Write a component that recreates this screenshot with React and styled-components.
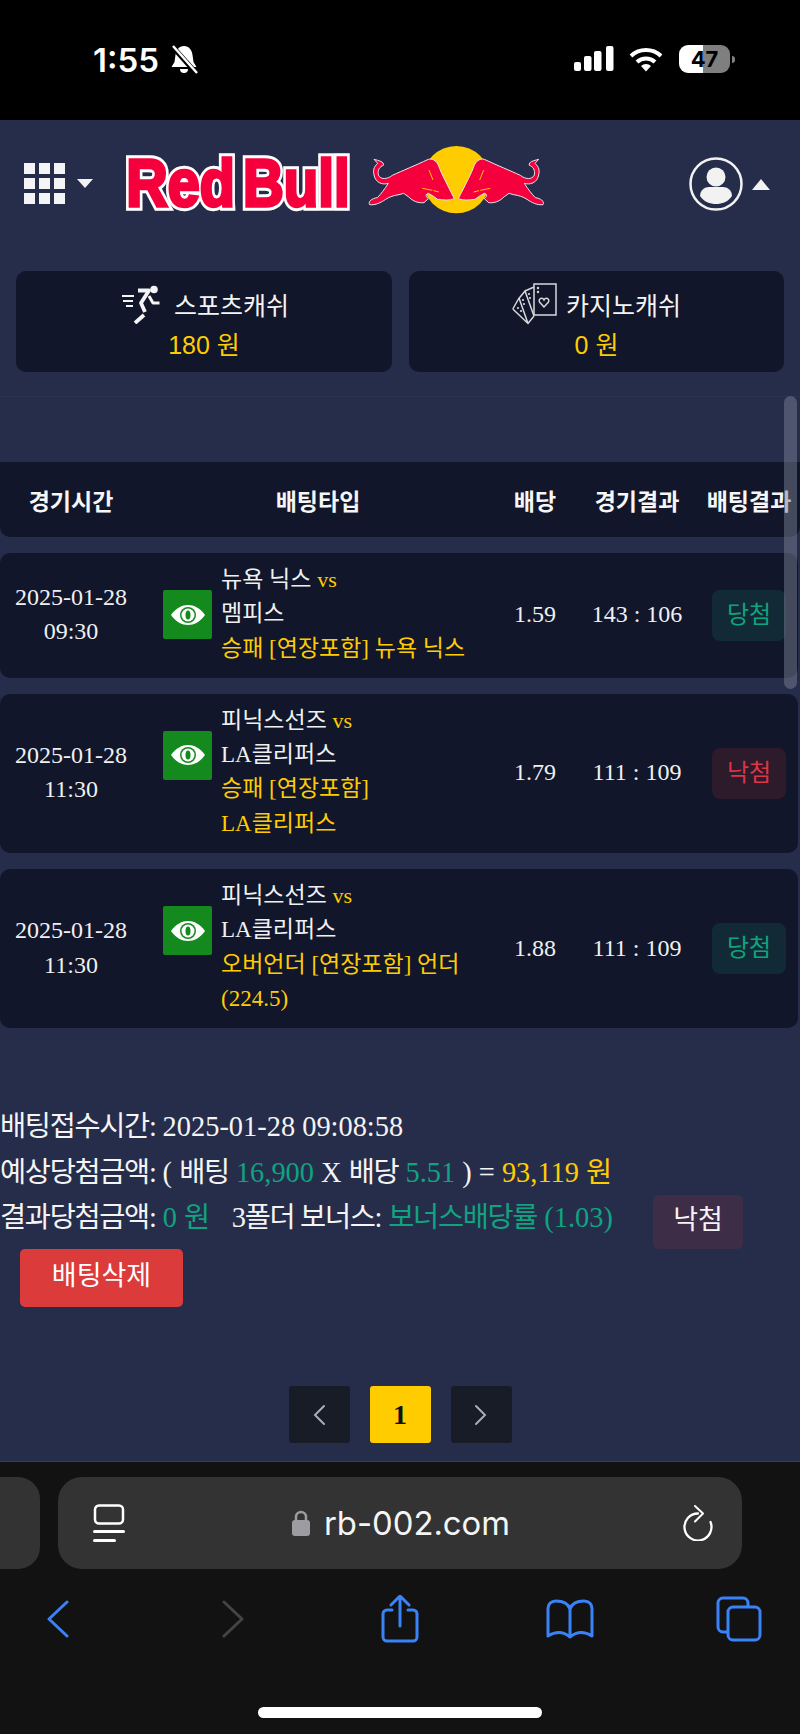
import React from 'react';
import styled, { createGlobalStyle } from 'styled-components';

const GOLD = '#ffcc00';
const GREEN = '#10a37f';
const BLUE = '#3a82f7';
const SERIF = '"Liberation Serif", "Noto Sans CJK KR", serif';
const SANS = '"Liberation Sans", "Noto Sans CJK KR", sans-serif';

const GlobalStyle = createGlobalStyle`
  html, body {
    margin: 0;
    padding: 0;
    background: #121212;
  }
  * {
    box-sizing: border-box;
  }
`;

const Page = styled.div`
  position: relative;
  width: 800px;
  height: 1734px;
  overflow: hidden;
  display: flex;
  flex-direction: column;
  font-family: ${SERIF};
`;

/* status bar */
const StatusBar = styled.div`
  height: 120px;
  background: #000;
  display: flex;
  align-items: flex-start;
  padding: 45px 0 0 93px;
  color: #fff;
`;

const Clock = styled.div`
  font-family: Inter, sans-serif;
  font-size: 33px;
  font-weight: 600;
  line-height: 30px;
  width: 77px;
`;

const StatusIcons = styled.div`
  display: flex;
  align-items: flex-start;
  margin-left: 376px;
`;

const Battery = styled.div`
  width: 51px;
  height: 28px;
  margin-left: 16px;
  border-radius: 9px;
  background: linear-gradient(90deg, #fff 0 24px, #7f7f7f 24px);
  color: #000;
  font-family: Inter, sans-serif;
  font-size: 22px;
  font-weight: 700;
  line-height: 28px;
  text-align: center;
`;

const BatteryNub = styled.div`
  width: 3px;
  height: 7px;
  margin: 11px 0 0 2px;
  border-radius: 0 3px 3px 0;
  background: #7f7f7f;
`;

/* site */
const Main = styled.div`
  position: relative;
  height: 1342px;
  background: #262d4b;
  border-bottom: 1px solid #3a3f52;
`;

const Header = styled.div`
  height: 151px;
  display: flex;
  align-items: flex-start;
  padding: 10px 30px 0 24px;
`;

const MenuBtn = styled.div`
  display: flex;
  align-items: center;
  gap: 12px;
  margin-top: 33px;
`;

const MenuGrid = styled.div`
  display: grid;
  grid-template-columns: repeat(3, 11px);
  grid-auto-rows: 11px;
  gap: 4px;
`;

const MenuDot = styled.span`
  background: #f4f4f6;
`;

const Triangle = styled.span`
  width: 0;
  height: 0;
  border-left: ${(p) => p.$w}px solid transparent;
  border-right: ${(p) => p.$w}px solid transparent;
  ${(p) => (p.$up ? 'border-bottom' : 'border-top')}: ${(p) => p.$h}px solid #f2f2f2;
`;

const Logo = styled.svg`
  width: 450px;
  height: 100px;
  margin-left: 16px;
  flex: none;
`;

const UserBtn = styled.div`
  display: flex;
  align-items: center;
  gap: 9px;
  margin-left: auto;
  margin-top: 27px;
`;

const Wallets = styled.div`
  display: grid;
  grid-template-columns: 376px 375px;
  gap: 17px;
  padding: 0 16px;
`;

const Wallet = styled.div`
  height: 101px;
  border-radius: 10px;
  background: #11162b;
  display: flex;
  flex-direction: column;
  align-items: center;
  padding-top: 12px;
  font-family: ${SANS};
`;

const WalletTitle = styled.div`
  display: flex;
  align-items: center;
  gap: ${(p) => p.$gap}px;
  height: 42px;
  margin-left: ${(p) => p.$shift || 0}px;
  color: #f4f4f4;
  font-size: 25px;
`;

const WalletValue = styled.div`
  margin-top: 2px;
  color: ${GOLD};
  font-size: 25px;
  line-height: 36px;
`;

const Divider = styled.div`
  height: 1px;
  margin-top: 24px;
  background: #2c3352;
`;

const Table = styled.div`
  padding-top: 65px;
`;

const HeadRow = styled.div`
  display: grid;
  grid-template-columns: 142px 352px 82px 122px 102px;
  align-items: center;
  height: 75px;
  background: #11162b;
  border-radius: 0 0 10px 10px;
  color: #f6f6f6;
  font-family: ${SANS};
  font-size: 23px;
  font-weight: 700;
  text-align: center;
`;

const BetRow = styled.div`
  display: grid;
  grid-template-columns: 142px 352px 82px 122px 102px;
  align-items: center;
  width: 798px;
  margin-top: 16px;
  padding: 10px 0 12px;
  background: #11162b;
  border-radius: 10px;
  color: #f0f0f0;
  font-size: 24px;
  line-height: 34.3px;
  text-align: center;
`;

const BetCell = styled.div`
  display: flex;
  align-items: flex-start;
  gap: 9px;
  padding: 0 20px 0 21px;
  text-align: left;
  font-size: 23px;
`;

const EyeBox = styled.div`
  flex: none;
  width: 49px;
  height: 49px;
  margin-top: 27px;
  border-radius: 2px;
  background: #148a1e;
  display: flex;
  align-items: center;
  justify-content: center;
`;

const Vs = styled.span`
  color: ${GOLD};
  font-size: 22px;
`;

const Pick = styled.div`
  color: ${GOLD};
  word-break: keep-all;
`;

const Result = styled.div`
  width: 74px;
  height: 51px;
  justify-self: center;
  margin-top: 2px;
  border-radius: 8px;
  background: ${(p) => (p.$won ? '#122a35' : '#2d1a2b')};
  color: ${(p) => (p.$won ? GREEN : '#dc3545')};
  font-family: ${SANS};
  font-size: 24px;
  line-height: 49px;
`;

const Details = styled.div`
  padding-top: 76px;
  color: #f4f4f4;
  font-size: 28.4px;
`;

const Line = styled.div`
  height: 46px;
  line-height: 46px;
  white-space: pre;
`;

const Ko = styled.span`
  letter-spacing: -1.3px;
`;

const LastLine = styled.div`
  display: flex;
  align-items: flex-start;
  height: 54px;
  margin-top: -1px;
`;

const LastText = styled.div`
  line-height: 46px;
  white-space: pre;
`;

const BonusLabel = styled(Ko)`
  margin-left: 23px;
`;

const Green = styled.span`
  color: ${GREEN};
`;

const Gold = styled.span`
  color: ${GOLD};
`;

const LostBtn = styled.div`
  width: 90px;
  height: 54px;
  margin-left: auto;
  margin-right: 57px;
  border-radius: 6px;
  background: #3d2d47;
  text-align: center;
  line-height: 50px;
  font-size: 27px;
`;

const DeleteBtn = styled.div`
  width: 163px;
  height: 58px;
  margin-left: 20px;
  border-radius: 5px;
  background: #dc3b3b;
  color: #fff;
  text-align: center;
  line-height: 54px;
  font-size: 27px;
`;

const Pager = styled.div`
  display: flex;
  justify-content: center;
  gap: 20px;
  margin-top: 79px;
`;

const PageBtn = styled.div`
  width: 61px;
  height: 57px;
  border-radius: 3px;
  background: ${(p) => (p.$active ? GOLD : '#171c26')};
  color: #111;
  display: flex;
  align-items: center;
  justify-content: center;
  font-size: 28px;
  font-weight: 700;
`;

const ScrollThumb = styled.div`
  position: absolute;
  top: 276px;
  right: 3px;
  width: 13px;
  height: 293px;
  border-radius: 7px;
  background: rgba(120, 125, 145, 0.5);
`;

/* browser chrome */
const Browser = styled.div`
  flex: 1;
  background: #121212;
  padding-top: 15px;
`;

const UrlRow = styled.div`
  display: flex;
  gap: 18px;
  height: 92px;
`;

const PrevTab = styled.div`
  width: 40px;
  border-radius: 0 22px 22px 0;
  background: #333;
`;

const UrlBar = styled.div`
  width: 684px;
  border-radius: 24px;
  background: #333;
  display: flex;
  align-items: center;
  padding: 0 29px 0 35px;
`;

const UrlText = styled.div`
  display: flex;
  align-items: center;
  gap: 14px;
  margin-left: 167px;
  margin-right: auto;
  color: #f5f5f5;
  font-family: Inter, sans-serif;
  font-size: 32.800px;
`;

const NavRow = styled.div`
  display: grid;
  grid-template-columns: 116px 234px 100px 240px 98px;
  align-items: center;
  justify-items: center;
  height: 48px;
  margin-top: 26px;
`;

const HomeBar = styled.div`
  width: 284px;
  height: 11px;
  margin: 64px auto 0;
  border-radius: 6px;
  background: #fff;
`;

/* drawings */
const BULL =
  'M795 88C810 92 826 95 823 106C812 110 805 120 808 135C815 150 835 148 850 136C880 122 920 106 958 88C974 84 986 96 992 116C1002 140 1018 170 1036 206C1022 212 1002 210 986 208L972 198L958 190C950 192 948 198 958 206L945 218C928 220 912 214 898 200L884 190L870 194C856 196 842 200 830 208C815 218 800 226 782 224C776 214 790 205 805 203C815 193 828 176 838 160C822 165 800 160 795 135C790 115 800 106 806 100Z';

const RedBullLogo = () => (
  <Logo viewBox="0 0 1350 300">
    <circle cx="1042" cy="149" r="101" fill="#ffcc00" />
    <path d={BULL} fill="#f5003c" stroke="#e6e6ee" strokeWidth="3" />
    <path d={BULL} fill="#f5003c" stroke="#e6e6ee" strokeWidth="3" transform="translate(2084 0) scale(-1 1)" />
    <path d="M960 120l12 30M940 175l30 6M990 186l-16-4" stroke="#ffcc00" strokeWidth="3" fill="none" />
    <path d="M1124 120l-12 30M1144 175l-30 6M1094 186l16-4" stroke="#ffcc00" strokeWidth="3" fill="none" />
    <g fontFamily="Liberation Sans, sans-serif" fontWeight="700" fontSize="198">
      <g fill="#fff" stroke="#fff" strokeWidth="28">
        <text x="52" y="227" textLength="326" lengthAdjust="spacingAndGlyphs">Red</text>
        <text x="402" y="227" textLength="320" lengthAdjust="spacingAndGlyphs">Bull</text>
      </g>
      <g fill="#f5003c" stroke="#f5003c" strokeWidth="10">
        <text x="52" y="227" textLength="326" lengthAdjust="spacingAndGlyphs">Red</text>
        <text x="402" y="227" textLength="320" lengthAdjust="spacingAndGlyphs">Bull</text>
      </g>
    </g>
  </Logo>
);

const BellOff = () => (
  <svg width="28" height="30" viewBox="0 0 28 30">
    <path d="M14 1c5 0 8 4 8.500 9l1 7 3 5H1.500l3-5 1-7C6 5 9 1 14 1z" fill="#fff" />
    <path d="M10 24h8a4 4 0 0 1-8 0z" fill="#fff" />
    <path d="M2 1l24 27" stroke="#000" strokeWidth="5" />
    <path d="M3 1l24 27" stroke="#fff" strokeWidth="2.500" />
  </svg>
);

const Signal = () => (
  <svg width="40" height="26" viewBox="0 0 40 26" style={{ marginTop: '1px' }}>
    <rect x="0" y="16" width="7" height="9" rx="2" fill="#fff" />
    <rect x="10" y="10" width="7.500" height="15" rx="2" fill="#fff" />
    <rect x="20" y="5" width="7.500" height="20" rx="2" fill="#fff" />
    <rect x="32" y="0" width="7.500" height="25" rx="2" fill="#fff" />
  </svg>
);

const Wifi = () => (
  <svg width="34" height="25" viewBox="0 0 34 25" style={{ marginLeft: '15px', marginTop: '2px' }}>
    <path d="M2 9a22 22 0 0 1 30 0" stroke="#fff" strokeWidth="4" fill="none" />
    <path d="M8 15a13 13 0 0 1 18 0" stroke="#fff" strokeWidth="4" fill="none" />
    <path d="M12 19a7 7 0 0 1 10 0l-5 5.500z" fill="#fff" />
  </svg>
);

const UserIcon = () => (
  <svg width="54" height="54" viewBox="0 0 54 54">
    <circle cx="27" cy="27" r="25.500" fill="none" stroke="#f2f2f2" strokeWidth="2.500" />
    <circle cx="27" cy="20" r="9.500" fill="#f2f2f2" />
    <path d="M11 39c0-6 5-9 9-9h14c4 0 9 3 9 9-4 6-10 8-16 8s-12-2-16-8z" fill="#f2f2f2" />
  </svg>
);

const RunnerIcon = () => (
  <svg width="38" height="39" viewBox="0 0 38 39" fill="none" stroke="#f4f4f4" strokeLinejoin="round">
    <circle cx="32" cy="4.500" r="3.800" fill="#f4f4f4" stroke="none" />
    <path d="M16 5.500h11L19 18l4 9" strokeWidth="3.800" />
    <path d="M22 30l-9 8" strokeWidth="3.800" />
    <path d="M27 11l4 7h6.500" strokeWidth="3" />
    <path d="M0 11h12M1 16h10M4 21h7" strokeWidth="1.800" />
  </svg>
);

const CardsIcon = () => (
  <svg width="45" height="42" viewBox="0 0 45 42" fill="none" stroke="#d8d8dc" strokeWidth="1.500">
    <path d="M22 1h22v31H22z" />
    <path d="M0.800 26L7 15M0.800 26L16 40.500l6-7.500M7 15l9 25.500M6.500 16L13 8l9 25M13 8l9-4" />
    <path d="M32 24l-4.500-5c-1.500-3.500 3-5 4.500-2 1.500-3 6-1.500 4.500 2z" />
    <g fill="#d8d8dc" stroke="none">
      <circle cx="26" cy="5" r="1.200" />
      <circle cx="26" cy="9" r="1.200" />
      <circle cx="17" cy="11" r="1.100" />
      <circle cx="18" cy="15" r="1.100" />
      <circle cx="11" cy="17" r="1.100" />
      <circle cx="12" cy="21" r="1.100" />
      <circle cx="6" cy="25" r="1.100" />
      <circle cx="9" cy="28" r="1.100" />
    </g>
  </svg>
);

const EyeIcon = () => (
  <svg width="36" height="20" viewBox="0 0 36 20">
    <path d="M1 10C6 3 12 0 18 0s12 3 17 10c-5 7-11 10-17 10S6 17 1 10z" fill="#fff" />
    <circle cx="18" cy="10" r="8" fill="#148a1e" />
    <circle cx="18" cy="10" r="6.500" fill="#fff" />
    <ellipse cx="18" cy="10" rx="2.500" ry="4.500" fill="#148a1e" />
  </svg>
);

const PagerArrow = ({ left }) => (
  <svg width="14" height="22" viewBox="0 0 14 22" fill="none" stroke="#a9adb5" strokeWidth="2" strokeLinecap="round">
    <path d={left ? 'M12 2L3 11l9 9' : 'M2 2l9 9-9 9'} />
  </svg>
);

const ReaderIcon = () => (
  <svg width="32" height="38" viewBox="0 0 32 38" fill="none" stroke="#fff" strokeWidth="2.500" strokeLinecap="round">
    <rect x="2" y="1.500" width="28" height="18" rx="4" />
    <path d="M1.500 27.500h29M1.500 36.500h20" strokeWidth="3" />
  </svg>
);

const LockIcon = () => (
  <svg width="18" height="26" viewBox="0 0 18 26" fill="none">
    <path d="M4 11V7a5 5 0 0 1 10 0v4" stroke="#9c9ca1" strokeWidth="2.500" />
    <rect x="0" y="10" width="18" height="16" rx="3" fill="#9c9ca1" />
  </svg>
);

const RefreshIcon = () => (
  <svg width="30" height="36" viewBox="0 0 30 36" fill="none" stroke="#fff" strokeWidth="2.300" strokeLinecap="round" strokeLinejoin="round">
    <path d="M15 8.500A13.500 13.500 0 1 0 27.500 17" />
    <path d="M12 1l8 7.500-8 8" strokeWidth="2" />
  </svg>
);

const BackIcon = ({ color }) => (
  <svg width="22" height="38" viewBox="0 0 22 38" fill="none" stroke={color} strokeWidth="3" strokeLinecap="round" strokeLinejoin="round">
    <path d="M20 2L2 19l18 17" />
  </svg>
);

const ForwardIcon = ({ color }) => (
  <svg width="22" height="38" viewBox="0 0 22 38" fill="none" stroke={color} strokeWidth="3" strokeLinecap="round" strokeLinejoin="round">
    <path d="M2 2l18 17L2 36" />
  </svg>
);

const ShareIcon = () => (
  <svg width="38" height="48" viewBox="0 0 38 48" fill="none" stroke={BLUE} strokeWidth="3" strokeLinecap="round" strokeLinejoin="round">
    <path d="M11 15H6a4 4 0 0 0-4 4v23a4 4 0 0 0 4 4h26a4 4 0 0 0 4-4V19a4 4 0 0 0-4-4h-5" />
    <path d="M19 31V2M10 10l9-9 9 9" />
  </svg>
);

const BookIcon = () => (
  <svg width="48" height="40" viewBox="0 0 48 40" fill="none" stroke={BLUE} strokeWidth="3" strokeLinecap="round" strokeLinejoin="round">
    <path d="M24 38V10C22 4 16 2 10 2 5 2 2 5 2 10v27c8-5 16-4 22 1 6-5 14-6 22-1V10c0-5-3-8-8-8-6 0-12 2-14 8" />
  </svg>
);

const TabsIcon = () => (
  <svg width="46" height="46" viewBox="0 0 46 46" fill="none" stroke={BLUE} strokeWidth="3" strokeLinejoin="round">
    <path d="M11 36H7a5 5 0 0 1-5-5V7a5 5 0 0 1 5-5h20a5 5 0 0 1 5 5v4" />
    <rect x="12" y="11" width="32" height="33" rx="5" />
  </svg>
);

const bets = [
  { date: '2025-01-28', time: '09:30', home: '뉴욕 닉스', away: '멤피스', pick: '승패 [연장포함] 뉴욕 닉스', odds: '1.59', score: '143 : 106', won: true },
  { date: '2025-01-28', time: '11:30', home: '피닉스선즈', away: 'LA클리퍼스', pick: '승패 [연장포함] LA클리퍼스', odds: '1.79', score: '111 : 109', won: false },
  { date: '2025-01-28', time: '11:30', home: '피닉스선즈', away: 'LA클리퍼스', pick: '오버언더 [연장포함] 언더 (224.5)', odds: '1.88', score: '111 : 109', won: true },
];

export default function App() {
  return (
    <Page>
      <GlobalStyle />
      <StatusBar>
        <Clock>1:55</Clock>
        <BellOff />
        <StatusIcons>
          <Signal />
          <Wifi />
          <Battery>47</Battery>
          <BatteryNub />
        </StatusIcons>
      </StatusBar>

      <Main>
        <Header>
          <MenuBtn>
            <MenuGrid>
              {Array.from({ length: 9 }).map((_, i) => (
                <MenuDot key={i} />
              ))}
            </MenuGrid>
            <Triangle $w={8} $h={9} />
          </MenuBtn>
          <RedBullLogo />
          <UserBtn>
            <UserIcon />
            <Triangle $up $w={9} $h={11} />
          </UserBtn>
        </Header>

        <Wallets>
          <Wallet>
            <WalletTitle $gap={14} $shift={3}>
              <RunnerIcon />
              스포츠캐쉬
            </WalletTitle>
            <WalletValue>180 원</WalletValue>
          </Wallet>
          <Wallet>
            <WalletTitle $gap={9}>
              <CardsIcon />
              카지노캐쉬
            </WalletTitle>
            <WalletValue>0 원</WalletValue>
          </Wallet>
        </Wallets>

        <Divider />

        <Table>
          <HeadRow>
            <div>경기시간</div>
            <div>배팅타입</div>
            <div>배당</div>
            <div>경기결과</div>
            <div>배팅결과</div>
          </HeadRow>
          {bets.map((bet, i) => (
            <BetRow key={i}>
              <div>
                {bet.date}
                <br />
                {bet.time}
              </div>
              <BetCell>
                <EyeBox>
                  <EyeIcon />
                </EyeBox>
                <div>
                  <div>
                    {bet.home} <Vs>vs</Vs>
                  </div>
                  <div>{bet.away}</div>
                  <Pick>{bet.pick}</Pick>
                </div>
              </BetCell>
              <div>{bet.odds}</div>
              <div>{bet.score}</div>
              <Result $won={bet.won}>{bet.won ? '당첨' : '낙첨'}</Result>
            </BetRow>
          ))}
        </Table>

        <Details>
          <Line>
            <Ko>배팅접수시간:</Ko> 2025-01-28 09:08:58
          </Line>
          <Line>
            <Ko>예상당첨금액:</Ko> ( <Ko>배팅</Ko> <Green>16,900</Green> X <Ko>배당</Ko> <Green>5.51</Green> ) = <Gold>93,119 <Ko>원</Ko></Gold>
          </Line>
          <LastLine>
            <LastText>
              <Ko>결과당첨금액:</Ko> <Green>0 <Ko>원</Ko></Green>
              <BonusLabel>3폴더 보너스:</BonusLabel> <Green><Ko>보너스배당률</Ko> (1.03)</Green>
            </LastText>
            <LostBtn>낙첨</LostBtn>
          </LastLine>
          <DeleteBtn>배팅삭제</DeleteBtn>
        </Details>

        <Pager>
          <PageBtn>
            <PagerArrow left />
          </PageBtn>
          <PageBtn $active>1</PageBtn>
          <PageBtn>
            <PagerArrow />
          </PageBtn>
        </Pager>

        <ScrollThumb />
      </Main>

      <Browser>
        <UrlRow>
          <PrevTab />
          <UrlBar>
            <ReaderIcon />
            <UrlText>
              <LockIcon />
              rb-002.com
            </UrlText>
            <RefreshIcon />
          </UrlBar>
        </UrlRow>
        <NavRow>
          <BackIcon color={BLUE} />
          <ForwardIcon color="#444" />
          <ShareIcon />
          <BookIcon />
          <TabsIcon />
        </NavRow>
        <HomeBar />
      </Browser>
    </Page>
  );
}
